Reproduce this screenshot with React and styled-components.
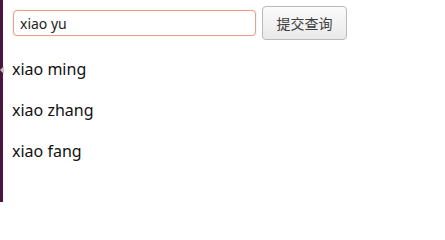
import styled, { createGlobalStyle } from 'styled-components'

const names = ['xiao ming', 'xiao zhang', 'xiao fang']

const GlobalStyle = createGlobalStyle`
  html, body {
    margin: 0;
    padding: 0;
    background: #fff;
  }
  body {
    font-family: "Noto Sans", "Noto Sans CJK SC", sans-serif;
    color: #111;
  }
`

const Page = styled.div`
  display: flex;
  min-height: 202px;
`

const Edge = styled.div`
  position: relative;
  width: 3px;
  flex: none;
  background: #4c1540;
`

const EdgeArrow = styled.span`
  position: absolute;
  left: 0;
  top: 66px;
  width: 0;
  height: 0;
  border-top: 4px solid transparent;
  border-bottom: 4px solid transparent;
  border-right: 4px solid #c9c0c6;
`

const Content = styled.div`
  flex: 1;
  padding: 6px 0 0 9px;
`

const SearchForm = styled.form`
  display: flex;
  align-items: center;
  gap: 6px;
`

const SearchInput = styled.input`
  box-sizing: border-box;
  width: 243px;
  height: 26px;
  margin: 0 0 0 1px;
  padding: 0 6px;
  border: 1px solid #e6a08c;
  border-radius: 4px;
  font-family: "Noto Sans", sans-serif;
  font-size: 14px;
  color: #222;
  outline: none;
  box-shadow: 0 0 2px rgba(230, 140, 110, 0.35);
`

const SubmitButton = styled.button`
  box-sizing: border-box;
  width: 85px;
  height: 34px;
  border: 1px solid #b9b9b9;
  border-radius: 4px;
  background: linear-gradient(#fbfbfb, #e9e9e9);
  font-family: "Noto Sans CJK SC", sans-serif;
  font-size: 14px;
  color: #3c3c3c;
  padding: 0;
  cursor: pointer;
`

const NameList = styled.div`
  padding-top: 1px;
`

const NameItem = styled.p`
  margin: 16px 0;
  font-size: 16px;
  line-height: 25px;
`

export default function App() {
  return (
    <>
      <GlobalStyle />
      <Page>
        <Edge>
          <EdgeArrow />
        </Edge>
        <Content>
          <SearchForm onSubmit={e => e.preventDefault()}>
            <SearchInput type="text" defaultValue="xiao yu" />
            <SubmitButton type="submit">提交查询</SubmitButton>
          </SearchForm>
          <NameList>
            {names.map(n => (
              <NameItem key={n}>{n}</NameItem>
            ))}
          </NameList>
        </Content>
      </Page>
    </>
  )
}
